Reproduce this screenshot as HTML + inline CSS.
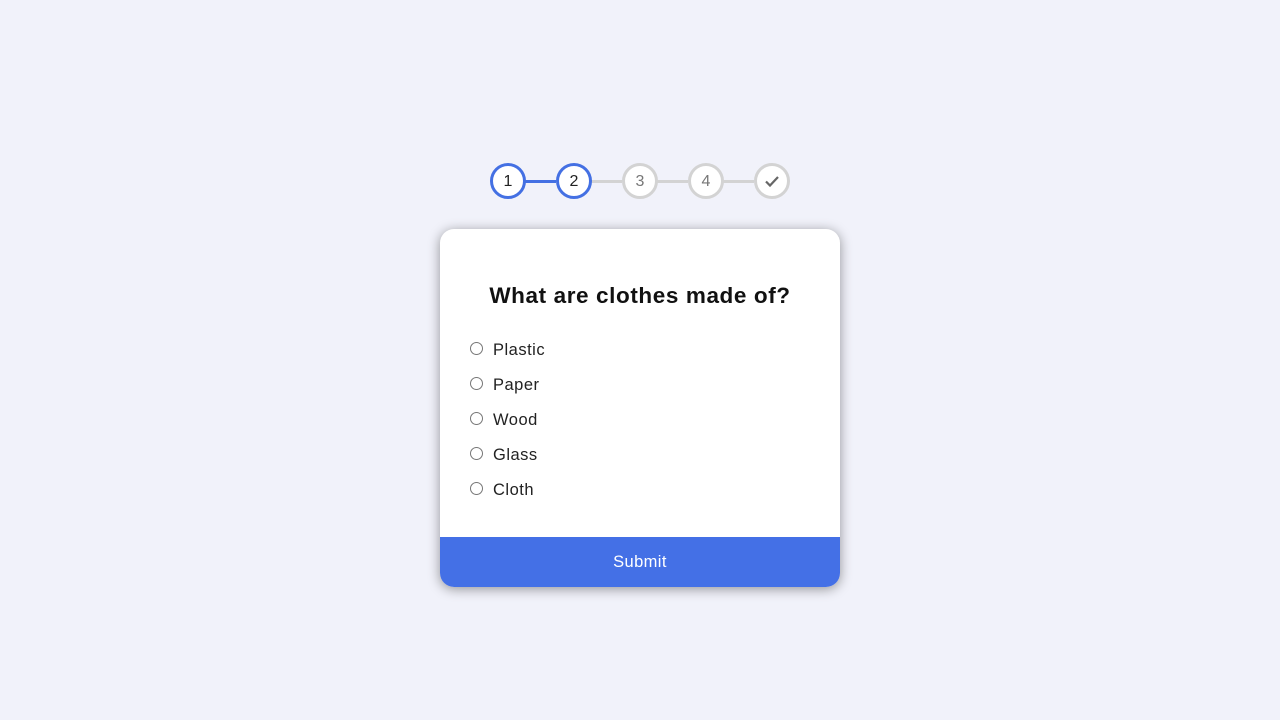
<!DOCTYPE html>
<html><head><style>
body{margin:0;width:1280px;height:720px;background:#f1f2fa;font-family:"Liberation Sans",sans-serif;position:relative;overflow:hidden}
.c{position:absolute;top:163px;width:30px;height:30px;border:3px solid #d3d3d3;border-radius:50%;background:#fff;color:#777;font-size:16px;text-align:center;line-height:31px}
.c.a{border-color:#4470e3;color:#222}
.l{position:absolute;top:180px;height:3px;width:32px;background:#d3d3d3}
.card{position:absolute;left:440px;top:229px;width:400px;height:358px;background:#fff;border-radius:14px;box-shadow:0 2px 12px rgba(0,0,0,.4);overflow:hidden}
h1{margin:0;position:absolute;top:54px;width:100%;text-align:center;font-size:22.5px;letter-spacing:0.6px;font-weight:bold;color:#111}
.o{position:absolute;left:30px;font-size:16.5px;letter-spacing:0.5px;color:#222;height:20px;line-height:20px}
.o i{position:absolute;left:0;top:3px;width:11px;height:11px;border:1px solid #777;border-radius:50%}
.o span{position:absolute;left:23px;top:1px;white-space:nowrap}
.btn{position:absolute;left:0;bottom:0;width:100%;height:50px;background:#4470e6;color:#fff;text-align:center;line-height:50px;font-size:16.5px;letter-spacing:0.4px}
</style></head><body>
<div class="l" style="left:524px;background:#4470e3"></div>
<div class="l" style="left:590px"></div>
<div class="l" style="left:656px"></div>
<div class="l" style="left:722px"></div>
<div class="c a" style="left:490px">1</div>
<div class="c a" style="left:556px">2</div>
<div class="c" style="left:622px">3</div>
<div class="c" style="left:688px">4</div>
<div class="c" style="left:754px"><svg width="16" height="16" viewBox="0 0 16 16" style="margin-top:7px"><path d="M2 8.5l4 4 8-8.5" fill="none" stroke="#666" stroke-width="2.2"/></svg></div>
<div class="card">
<h1>What are clothes made of?</h1>
<div class="o" style="top:110px"><i></i><span>Plastic</span></div>
<div class="o" style="top:145px"><i></i><span>Paper</span></div>
<div class="o" style="top:180px"><i></i><span>Wood</span></div>
<div class="o" style="top:215px"><i></i><span>Glass</span></div>
<div class="o" style="top:250px"><i></i><span>Cloth</span></div>
<div class="btn">Submit</div>
</div>
</body></html>
